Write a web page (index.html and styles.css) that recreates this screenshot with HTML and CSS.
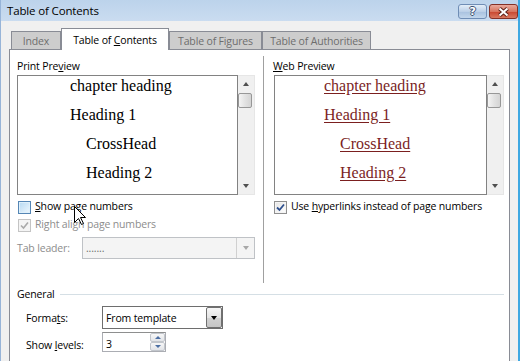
FILE: index.html
```html
<!DOCTYPE html>
<html lang="en">
<head>
  <meta charset="UTF-8">
  <title>Table of Contents</title>
  <link rel="stylesheet" href="styles.css">
</head>
<body>
  <div class="window">
    <div class="titlebar">
      <span class="title">Table of Contents</span>
      <div class="caption-buttons">
        <span class="cap-btn help-btn">?</span>
        <span class="cap-btn close-btn">
          <svg width="13" height="10" viewBox="0 0 13 10">
            <path d="M2.5 1.5 L10.5 8.5 M10.5 1.5 L2.5 8.5" stroke="#5b2119" stroke-width="4" fill="none"/>
            <path d="M2.5 1.5 L10.5 8.5 M10.5 1.5 L2.5 8.5" stroke="#fff" stroke-width="2" fill="none"/>
          </svg>
        </span>
      </div>
    </div>

    <div class="client">
      <div class="tabs">
        <div class="tab tab-index">Index</div>
        <div class="tab tab-toc selected">Table of <u>C</u>ontents</div>
        <div class="tab tab-figures">Table of Figures</div>
        <div class="tab tab-auth">Table of Authorities</div>
      </div>

      <div class="panel">
        <div class="columns">
          <div class="col col-print">
            <div class="group-label">Print Pre<u>v</u>iew</div>
            <div class="preview">
              <div class="preview-list">
                <div class="entry">chapter heading</div>
                <div class="entry">Heading 1</div>
                <div class="entry sub">CrossHead</div>
                <div class="entry sub">Heading 2</div>
              </div>
              <div class="scrollbar">
                <div class="sb-btn"><span class="arrow-up"></span></div>
                <div class="sb-thumb"></div>
                <div class="sb-track"></div>
                <div class="sb-btn"><span class="arrow-down"></span></div>
              </div>
            </div>
            <div class="check-row first">
              <span class="checkbox hover"></span>
              <span><u>S</u>how page numbers</span>
            </div>
            <div class="check-row disabled">
              <span class="checkbox checked">
                <svg width="11" height="11" viewBox="0 0 11 11"><path d="M2 5.5 L4.5 8 L9 2.5" stroke="#a9a9a9" stroke-width="1.6" fill="none"/></svg>
              </span>
              <span>Right align page numbers</span>
            </div>
            <div class="leader-row">
              <span class="leader-label">Tab leader:</span>
              <div class="combo combo-disabled">
                <span class="combo-text">.......</span>
                <span class="combo-arrow"><span class="arrow-down grey"></span></span>
              </div>
            </div>
          </div>

          <div class="col col-web">
            <div class="group-label"><u>W</u>eb Preview</div>
            <div class="preview web">
              <div class="preview-list">
                <div class="entry">chapter heading</div>
                <div class="entry">Heading 1</div>
                <div class="entry sub">CrossHead</div>
                <div class="entry sub">Heading 2</div>
              </div>
              <div class="scrollbar">
                <div class="sb-btn"><span class="arrow-up"></span></div>
                <div class="sb-thumb"></div>
                <div class="sb-track"></div>
                <div class="sb-btn"><span class="arrow-down"></span></div>
              </div>
            </div>
            <div class="check-row first">
              <span class="checkbox checked">
                <svg width="11" height="11" viewBox="0 0 11 11"><path d="M2 5.5 L4.5 8 L9 2.5" stroke="#2d4f8e" stroke-width="1.8" fill="none"/></svg>
              </span>
              <span>Use <u>h</u>yperlinks instead of page numbers</span>
            </div>
          </div>
        </div>

        <div class="general">
          <span>General</span>
          <span class="general-line"></span>
        </div>

        <div class="field-row formats-row">
          <span class="field-label">Forma<u>t</u>s:</span>
          <div class="combo combo-formats">
            <span class="combo-text">From template</span>
            <span class="drop-btn"><span class="arrow-down black"></span></span>
          </div>
        </div>

        <div class="field-row levels-row">
          <span class="field-label">Show <u>l</u>evels:</span>
          <div class="spin">
            <span class="spin-text">3</span>
            <span class="spin-btns">
              <span class="spin-btn"><span class="arrow-up blue"></span></span>
              <span class="spin-btn"><span class="arrow-down blue"></span></span>
            </span>
          </div>
        </div>
      </div>
    </div>
  </div>

  <svg class="cursor" width="13" height="20" viewBox="0 0 13 20">
    <path d="M0.5 0.5 L0.5 16.5 L4.5 12.5 L7.5 18.5 L9.5 17.5 L6.5 11.5 L11.5 11.5 Z" fill="#fff" stroke="#000" stroke-width="1"/>
  </svg>
</body>
</html>
```

FILE: styles.css
```css
body {
  margin: 0;
  width: 520px;
  height: 361px;
  overflow: hidden;
  position: relative;
  font-family: "Open Sans", sans-serif;
  font-size: 10.5px;
  letter-spacing: -0.15px;
  color: #000;
  background: #f0f0f0;
}

.window {
  height: 361px;
  box-sizing: border-box;
  border-left: 1px solid #97b4d8;
  border-right: 2px solid #3ea8e2;
  display: flex;
  flex-direction: column;
}

.titlebar {
  height: 21px;
  flex: none;
  display: flex;
  align-items: flex-start;
  padding-left: 6px;
  background: linear-gradient(#bcd3eb, #cadcf0);
}

.title {
  flex: 1;
  font-size: 11.5px;
  line-height: 14px;
  margin-top: 4px;
  color: #000;
}

.caption-buttons {
  display: flex;
  margin-top: 4px;
}

.cap-btn {
  width: 29px;
  height: 15px;
  box-sizing: border-box;
  border-radius: 3px;
  display: flex;
  align-items: center;
  justify-content: center;
}

.help-btn {
  border: 1px solid #6f8db5;
  background: linear-gradient(#e3edf8, #bcd0e8 50%, #a8c1df 51%, #c2d6ec);
  color: #fff;
  font-family: "DejaVu Sans", sans-serif;
  font-weight: bold;
  font-size: 11px;
  line-height: 13px;
  text-shadow: -1px 0 #3d5170, 1px 0 #3d5170, 0 -1px #3d5170, 0 1px #3d5170;
}

.close-btn {
  margin-left: 2px;
  border: 1px solid #843126;
  background: linear-gradient(#e9a99c, #d7765f 50%, #c8452e 51%, #d8785f);
}

.client {
  flex: 1;
  display: flex;
  flex-direction: column;
  padding: 7px 8px 0 8px;
}

.tabs {
  display: flex;
  height: 21px;
  flex: none;
  padding-left: 2px;
}

.tab {
  box-sizing: border-box;
  height: 18px;
  margin-top: 3px;
  padding-top: 2px;
  border: 1px solid #898c95;
  border-bottom: none;
  background: #cdcdcd;
  color: #6d6d6d;
  text-align: center;
  line-height: 14px;
  white-space: nowrap;
}

.tab-index { width: 50px; }
.tab-toc { width: 108px; }
.tab-figures { width: 93px; }
.tab-auth { width: 109px; }

.tab.selected {
  height: 22px;
  margin-top: 0;
  padding-top: 4px;
  background: #fff;
  color: #000;
  position: relative;
  z-index: 1;
}

.panel {
  flex: 1;
  background: #fff;
  border: 1px solid #898c95;
  border-bottom: none;
  padding-left: 7px;
}

.columns {
  display: flex;
  padding-top: 6px;
}

.col {
  box-sizing: border-box;
  height: 227px;
  padding-top: 3px;
}

.col-print {
  width: 238px;
}

.col-web {
  flex: 1;
  margin-left: 8px;
  padding-left: 9px;
  border-left: 1px solid #a0a0a0;
}

.group-label {
  line-height: 14px;
}

.preview {
  display: flex;
  height: 120px;
  margin-top: 2px;
}

.preview-list {
  width: 221px;
  box-sizing: border-box;
  border: 1px solid #828282;
  padding-left: 52px;
  font-family: "Liberation Serif", serif;
  font-size: 16px;
  letter-spacing: 0;
  line-height: 20px;
  overflow: hidden;
  white-space: nowrap;
}

.web {
  margin-left: 1px;
}

.web .preview-list {
  width: 213px;
  padding-left: 49px;
  color: #7b1f1f;
}

.web .entry {
  text-decoration: underline;
  text-underline-offset: 2px;
}

.entry {
  margin-bottom: 9px;
}

.entry.sub {
  padding-left: 16px;
}

.scrollbar {
  width: 17px;
  box-sizing: border-box;
  border: 1px solid #e6e6e6;
  border-left: none;
  background: #f0f0f0;
  display: flex;
  flex-direction: column;
}

.sb-btn {
  height: 16px;
  display: flex;
  align-items: center;
  justify-content: center;
}

.sb-thumb {
  height: 15px;
  width: 14px;
  margin-top: 1px;
  box-sizing: border-box;
  border: 1px solid #979797;
  border-radius: 2px;
  background: linear-gradient(90deg, #f4f4f4, #e2e2e2 50%, #d4d4d4);
}

.sb-track {
  flex: 1;
}

.arrow-up,
.arrow-down {
  width: 0;
  height: 0;
  border-left: 3.5px solid transparent;
  border-right: 3.5px solid transparent;
}

.arrow-up {
  border-bottom: 4px solid #505050;
}

.arrow-down {
  border-top: 4px solid #505050;
}

.arrow-down.grey {
  border-top-color: #a8a8a8;
}

.arrow-down.black {
  border-top-color: #000;
}

.arrow-up.blue {
  border-bottom-color: #4c6fa3;
  border-left-width: 3px;
  border-right-width: 3px;
  border-bottom-width: 3px;
}

.arrow-down.blue {
  border-top-color: #4c6fa3;
  border-left-width: 3px;
  border-right-width: 3px;
  border-top-width: 3px;
}

.check-row {
  display: flex;
  align-items: flex-start;
  height: 18px;
  line-height: 14px;
  white-space: nowrap;
}

.check-row.first {
  margin-top: 4px;
}

.check-row.disabled {
  color: #8d8d8d;
}

.checkbox {
  width: 13px;
  height: 13px;
  flex: none;
  box-sizing: border-box;
  margin: 2px 4px 0 1px;
  border: 1px solid #8f8f8f;
  background: linear-gradient(135deg, #dadfe4, #fbfbfb);
  box-shadow: inset 0 0 0 1px #f4f4f4;
  display: flex;
  align-items: center;
  justify-content: center;
}

.checkbox.hover {
  border-color: #5586b5;
  background: linear-gradient(135deg, #b6d9f2, #eef7fd);
  box-shadow: inset 0 0 0 1px #def0fb;
}

.checkbox.checked {
  background: linear-gradient(135deg, #e4e4e4, #ffffff);
}

.disabled .checkbox {
  border-color: #c4c4c4;
  background: #f4f4f4;
}

.leader-row {
  display: flex;
  align-items: center;
  height: 22px;
  margin-top: 2px;
}

.leader-label {
  width: 65px;
  color: #8d8d8d;
  line-height: 14px;
}

.combo {
  box-sizing: border-box;
  display: flex;
}

.combo-disabled {
  width: 173px;
  height: 22px;
  border: 1px solid #bfc2c6;
  background: #f4f4f4;
  color: #6d6d6d;
}

.combo-text {
  flex: 1;
  padding-left: 3px;
  line-height: 14px;
  padding-top: 3px;
  white-space: nowrap;
}

.combo-arrow {
  width: 17px;
  border-left: 1px solid #d0d0d0;
  display: flex;
  align-items: center;
  justify-content: center;
}

.general {
  display: flex;
  align-items: center;
  height: 14px;
  margin-top: 4px;
  line-height: 14px;
}

.general-line {
  flex: 1;
  height: 1px;
  margin: 0 5px 0 5px;
  background: #d5dfe5;
}

.field-row {
  display: flex;
  padding-left: 9px;
  line-height: 14px;
}

.field-label {
  width: 76px;
}

.formats-row {
  margin-top: 5px;
  height: 23px;
}

.formats-row .field-label {
  padding-top: 5px;
}

.combo-formats {
  width: 121px;
  height: 23px;
  border: 1px solid #6e6e6e;
  background: #fff;
}

.combo-formats .combo-text {
  padding-top: 4px;
}

.drop-btn {
  width: 16px;
  height: 21px;
  box-sizing: border-box;
  border: 1px solid #707070;
  border-radius: 2px;
  background: linear-gradient(#f6f6f6, #e4e4e4 50%, #d2d2d2 51%, #c6c6c6);
  display: flex;
  align-items: center;
  justify-content: center;
}

.levels-row {
  margin-top: 3px;
  height: 20px;
}

.levels-row .field-label {
  padding-top: 6px;
}

.spin {
  width: 64px;
  height: 20px;
  box-sizing: border-box;
  border: 1px solid #abadb3;
  border-top-color: #8e8f8f;
  background: #fff;
  display: flex;
}

.spin-text {
  flex: 1;
  padding: 4px 0 0 3px;
}

.spin-btns {
  width: 15px;
  display: flex;
  flex-direction: column;
}

.spin-btn {
  flex: 1;
  box-sizing: border-box;
  border: 1px solid #c2c6cc;
  border-radius: 2px;
  background: linear-gradient(#f7f7f7, #e2e4e8);
  display: flex;
  align-items: center;
  justify-content: center;
}

.cursor {
  position: absolute;
  left: 74px;
  top: 206px;
}
```
